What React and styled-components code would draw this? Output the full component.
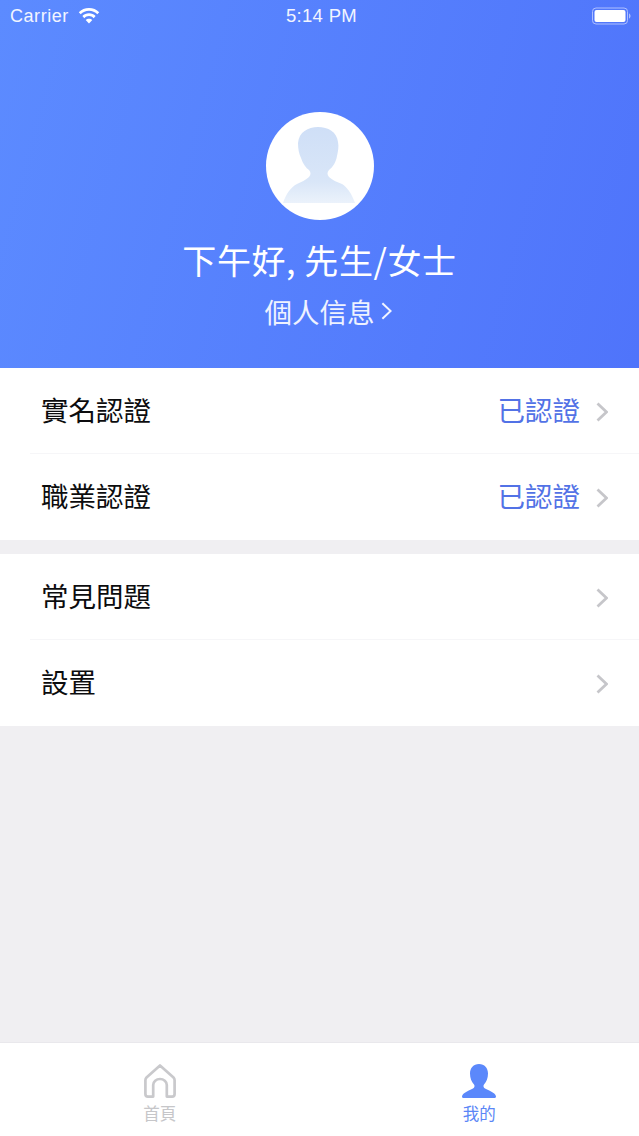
import React from "react";
import styled, { createGlobalStyle } from "styled-components";

const Global = createGlobalStyle`
  html, body { margin: 0; padding: 0; background: #f0eff2; }
  body { font-family: "Noto Sans CJK TC", "Noto Sans CJK SC", sans-serif; }
  * { box-sizing: border-box; }
`;

const Page = styled.div`
  width: 639px;
  height: 1136px;
  display: flex;
  flex-direction: column;
  overflow: hidden;
  background: #f0eff2;
`;

const Header = styled.header`
  height: 368px;
  flex: none;
  display: flex;
  flex-direction: column;
  align-items: center;
  color: #fff;
  background: linear-gradient(105deg, #5c8bff 0%, #4f74fb 100%);
`;

const StatusBar = styled.div`
  width: 100%;
  height: 32px;
  padding: 0 8px 0 10px;
  display: grid;
  grid-template-columns: 1fr auto 1fr;
  align-items: center;
  font-family: "Liberation Sans", sans-serif;
  font-size: 18px;
  color: #f2f5ff;
`;

const StatusLeft = styled.div`
  display: flex;
  align-items: center;
  gap: 9px;
  letter-spacing: 0.55px;
`;

const StatusRight = styled.div`
  display: flex;
  justify-content: flex-end;
`;

const Clock = styled.span`
  font-size: 18.5px;
  letter-spacing: 0.3px;
  margin-left: 2px;
`;

const Avatar = styled.div`
  width: 108px;
  height: 108px;
  margin-top: 80px;
  border-radius: 50%;
  background: #fff;
  overflow: hidden;
  display: flex;
  flex: none;
`;

const Greeting = styled.h1`
  margin: 15px 0 0;
  font-size: 34px;
  line-height: 50px;
  font-weight: 400;
  letter-spacing: 0.6px;
  white-space: nowrap;
  height: 50px;
`;

const ProfileLink = styled.div`
  margin-top: 6px;
  display: flex;
  align-items: center;
  gap: 6px;
  margin-left: 17px;
  font-size: 27.5px;
  line-height: 40px;
  font-weight: 400;
  color: #eef2ff;
`;

const Group = styled.section`
  background: #fff;
  flex: none;
  & + & {
    margin-top: 14px;
  }
`;

const Row = styled.div`
  height: 86px;
  padding: 0 31px 4px 41px;
  display: flex;
  align-items: center;
  justify-content: space-between;
  position: relative;
  &:not(:last-child)::after {
    content: "";
    position: absolute;
    bottom: 0;
    left: 30px;
    right: 0;
    height: 1px;
    background: #f6f6f8;
  }
`;

const RowLabel = styled.span`
  font-size: 27.5px;
  line-height: 40px;
  color: #0c0c0e;
`;

const RowEnd = styled.div`
  display: flex;
  align-items: center;
  gap: 16px;
`;

const Status = styled.span`
  font-size: 27.5px;
  line-height: 40px;
  font-weight: 400;
  color: #5272e6;
`;

const RowChevron = styled.span`
  display: flex;
  margin-top: 6px;
`;

const Spacer = styled.div`
  flex: 1;
`;

const TabBar = styled.nav`
  height: 94px;
  flex: none;
  display: grid;
  grid-template-columns: 1fr 1fr;
  background: #fff;
  border-top: 1px solid #e9e8ec;
`;

const Tab = styled.div`
  display: flex;
  flex-direction: column;
  align-items: center;
  padding-top: 19px;
  color: ${(p) => (p.$active ? "#5b86f6" : "#c6c6c9")};
`;

const TabIcon = styled.div`
  height: 36px;
  display: flex;
  align-items: flex-end;
`;

const TabLabel = styled.span`
  margin-top: 3px;
  font-size: 16.5px;
  line-height: 24px;
`;

const ChevronWrap = styled.svg`
  flex: none;
`;

const Chevron = ({ w = 12, h = 20, color = "#c6c6ca", sw = 2.8 }) => (
  <ChevronWrap width={w} height={h} viewBox="0 0 12 20" fill="none">
    <path d="M1.5 1.5 L10.5 10 L1.5 18.5" stroke={color} strokeWidth={sw} />
  </ChevronWrap>
);

const Wifi = () => (
  <svg width="22" height="16" viewBox="0 0 20 15" fill="#fff">
    <path d="M10 0C6.2 0 2.9 1.500.4 3.900l1.800 1.900C4.200 3.800 7 2.600 10 2.600s5.800 1.200 7.800 3.200l1.800-1.900C17.100 1.500 13.800 0 10 0z" />
    <path d="M10 5C7.600 5 5.400 6 3.800 7.600l1.800 1.900C6.800 8.300 8.300 7.600 10 7.600s3.200.7 4.400 1.900l1.800-1.900C14.600 6 12.400 5 10 5z" />
    <path d="M10 10c-1.200 0-2.300.5-3.100 1.300L10 14.600l3.100-3.300C12.300 10.500 11.200 10 10 10z" />
  </svg>
);

const Battery = () => (
  <svg width="39" height="18" viewBox="0 0 39 18" fill="none">
    <rect x="0.5" y="1" width="35" height="16" rx="3.5" stroke="#aebfff" />
    <rect x="2.5" y="3" width="31" height="12" rx="2" fill="#fff" />
    <path d="M37 6.500c1 .3 1.500 1.300 1.500 2.500s-.5 2.200-1.500 2.500z" fill="#aebfff" />
  </svg>
);

const AvatarFigure = () => (
  <svg width="108" height="108" viewBox="0 0 108 108">
    <defs>
      <linearGradient id="fig" x1="0" y1="0" x2="0" y2="1">
        <stop offset="0" stopColor="#cfdff7" />
        <stop offset="0.72" stopColor="#d9e6f8" />
        <stop offset="1" stopColor="#ebf2fb" />
      </linearGradient>
    </defs>
    <path
      fill="url(#fig)"
      d="M52 15 C42 15 33 20 32 31 C32 37 33 42 35 46 C37 52 40 56 43 58 C45 60 45 63 43 65 C40 68 35 70 31 72 C25 75 20 82 17 91 H89 C86 82 81 75 76 72 C71 70 66 68 63 65 C61 63 61 60 63 58 C67 55 70 50 71 44 C72 39 73 35 72 30 C71 20 62 15 52 15 Z"
    />
  </svg>
);

const HomeIcon = () => (
  <svg width="32" height="34" viewBox="0 0 32 34" fill="none">
    <path
      d="M16 1.500 L2.500 13.500 C1.800 14.200 1.400 15.200 1.400 16.200 V30 C1.400 31.500 2.400 32.600 3.900 32.600 H9.200 V21 C9.200 17.500 12.300 15 16 15 C19.700 15 22.800 17.500 22.800 21 V32.600 H28.100 C29.600 32.600 30.600 31.500 30.600 30 V16.200 C30.600 15.200 30.200 14.200 29.500 13.500 Z"
      stroke="#c9c9cc"
      strokeWidth="2.7"
      strokeLinejoin="round"
    />
  </svg>
);

const PersonIcon = () => (
  <svg width="34" height="34" viewBox="0 0 34 34" fill="#5b88fb">
    <path d="M17 0C11.500 0 8 4 8 9.500 C8 14 9.500 18 12 20.500 C13 22 12.500 23.500 11 24.500 C8.500 26 5 27 2.500 29 C1 30 0 31.500 0 32.500 C0 33.500 .8 34 2 34 H32 C33.200 34 34 33.500 34 32.500 C34 31.500 33 30 31.500 29 C29 27 25.500 26 23 24.500 C21.500 23.500 21 22 22 20.500 C24.500 18 26 14 26 9.500 C26 4 22.500 0 17 0 Z" />
  </svg>
);

const groups = [
  [
    { label: "實名認證", status: "已認證" },
    { label: "職業認證", status: "已認證" },
  ],
  [{ label: "常見問題" }, { label: "設置" }],
];

export default function App() {
  return (
    <Page>
      <Global />
      <Header>
        <StatusBar>
          <StatusLeft>
            <span>Carrier</span>
            <Wifi />
          </StatusLeft>
          <Clock>5:14 PM</Clock>
          <StatusRight>
            <Battery />
          </StatusRight>
        </StatusBar>
        <Avatar>
          <AvatarFigure />
        </Avatar>
        <Greeting>下午好, 先生/女士</Greeting>
        <ProfileLink>
          個人信息
          <Chevron w={11} h={20} color="#f1f4ff" sw={2.2} />
        </ProfileLink>
      </Header>
      {groups.map((rows, i) => (
        <Group key={i}>
          {rows.map((r) => (
            <Row key={r.label}>
              <RowLabel>{r.label}</RowLabel>
              <RowEnd>
                {r.status && <Status>{r.status}</Status>}
                <RowChevron>
                  <Chevron />
                </RowChevron>
              </RowEnd>
            </Row>
          ))}
        </Group>
      ))}
      <Spacer />
      <TabBar>
        <Tab>
          <TabIcon>
            <HomeIcon />
          </TabIcon>
          <TabLabel>首頁</TabLabel>
        </Tab>
        <Tab $active>
          <TabIcon>
            <PersonIcon />
          </TabIcon>
          <TabLabel>我的</TabLabel>
        </Tab>
      </TabBar>
    </Page>
  );
}
